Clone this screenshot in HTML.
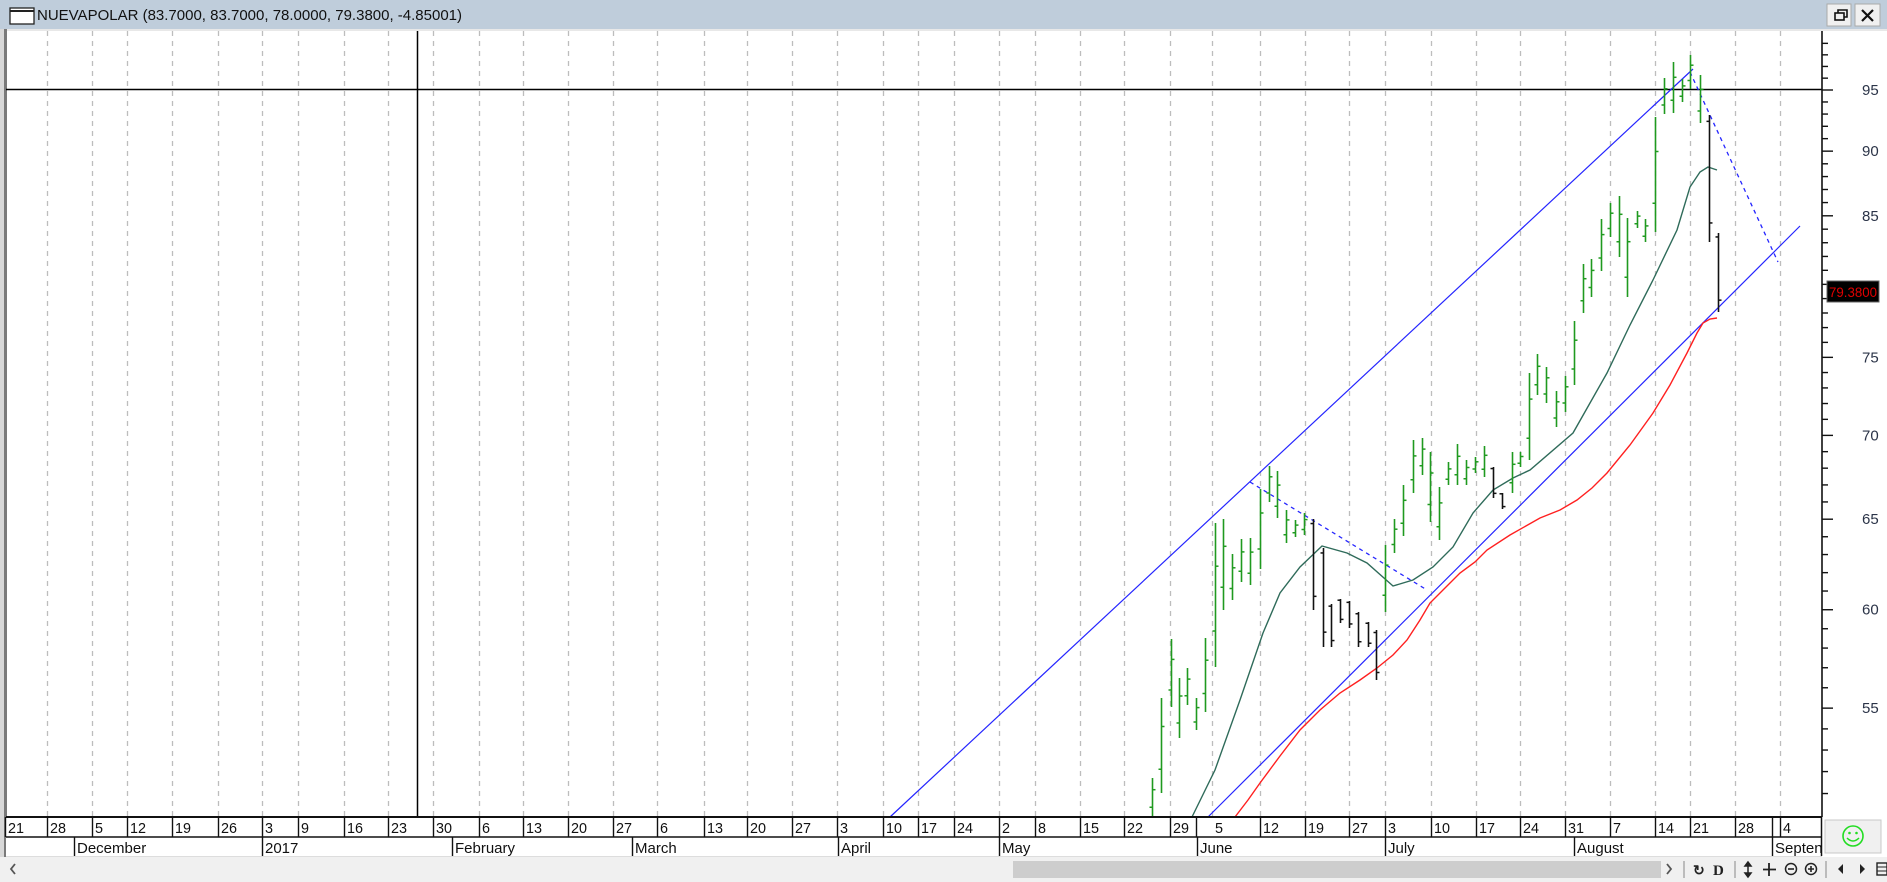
<!DOCTYPE html>
<html><head><meta charset="utf-8">
<style>
html,body{margin:0;padding:0;background:#fff;width:1887px;height:882px;overflow:hidden;font-family:"Liberation Sans",sans-serif}
svg{display:block}
</style></head>
<body>
<svg id="s" width="1887" height="882" viewBox="0 0 1887 882" xmlns="http://www.w3.org/2000/svg" font-family="Liberation Sans, sans-serif">
<rect x="0" y="0" width="1887" height="882" fill="#fff"/>
<rect x="0" y="0" width="1887" height="29" fill="#bfcddb"/>
<rect x="0" y="29" width="1887" height="2" fill="#e8e8e8"/>
<rect x="10" y="8" width="24" height="16" fill="#fff" stroke="#222" stroke-width="1.3"/>
<line x1="10" y1="11" x2="34" y2="11" stroke="#222" stroke-width="2"/>
<text x="37" y="20" font-size="15" fill="#111">NUEVAPOLAR (83.7000, 83.7000, 78.0000, 79.3800, -4.85001)</text>
<rect x="1827" y="4" width="24" height="22" fill="#f0f0f0" stroke="#aaa"/>
<rect x="1835" y="13" width="9" height="7" fill="none" stroke="#111" stroke-width="1.6"/>
<path d="M1838 13V10h9v7h-3" fill="none" stroke="#111" stroke-width="1.6"/>
<rect x="1855" y="4" width="25" height="22" fill="#f0f0f0" stroke="#aaa"/>
<path d="M1862 10l11 11M1873 10l-11 11" stroke="#111" stroke-width="2.2"/>
<rect x="0" y="29" width="4" height="828" fill="#d8d8d8"/>
<rect x="4" y="29" width="3" height="828" fill="#7a7a7a"/>
<g id="grid"></g>
<g id="chart"></g>
<g id="axis"></g>
<g id="bottom"></g>
</svg>
<script>
var NS="http://www.w3.org/2000/svg";
function el(par,tag,attrs,txt){var e=document.createElementNS(NS,tag);for(var k in attrs)e.setAttribute(k,attrs[k]);if(txt!==undefined)e.textContent=txt;document.getElementById(par).appendChild(e);return e;}
var seps=[[5,"21"],[47,"28"],[92,"5"],[127,"12"],[172,"19"],[218,"26"],[262,"3"],[298,"9"],[344,"16"],[388,"23"],[433,"30"],[479,"6"],[523,"13"],[568,"20"],[613,"27"],[657,"6"],[704,"13"],[747,"20"],[792,"27"],[837,"3"],[883,"10"],[918,"17"],[954,"24"],[999,"2"],[1035,"8"],[1080,"15"],[1124,"22"],[1170,"29"],[1212,"5"],[1260,"12"],[1305,"19"],[1349,"27"],[1385,"3"],[1431,"10"],[1476,"17"],[1520,"24"],[1565,"31"],[1610,"7"],[1655,"14"],[1690,"21"],[1735,"28"],[1780,"4"]];
seps.forEach(function(s){if(s[0]>10)el("grid","line",{x1:s[0]+.5,y1:31,x2:s[0]+.5,y2:816,stroke:"#bdbdbd","stroke-width":1.3,"stroke-dasharray":"5,5"});});
el("grid","line",{x1:6,y1:89.5,x2:1822,y2:89.5,stroke:"#000","stroke-width":1.5});
el("grid","line",{x1:417.5,y1:31,x2:417.5,y2:817,stroke:"#000","stroke-width":1.5});
el("chart","line",{x1:890,y1:817,x2:1693,y2:69,stroke:"#2525ff","stroke-width":1.2});
el("chart","line",{x1:1208,y1:817,x2:1800,y2:226,stroke:"#2525ff","stroke-width":1.2});
el("chart","line",{x1:1250,y1:482,x2:1427,y2:590,stroke:"#2525ff","stroke-width":1.3,"stroke-dasharray":"4,4"});
el("chart","line",{x1:1690,y1:72,x2:1778,y2:262,stroke:"#2525ff","stroke-width":1.3,"stroke-dasharray":"4,4"});
function poly(pts,c){el("chart","polyline",{points:pts.map(function(p){return p.join(",")}).join(" "),fill:"none",stroke:c,"stroke-width":1.4});}
poly([[1192,817],[1215,770],[1240,700],[1263,633],[1280,593],[1300,567],[1322,546],[1347,553],[1367,563],[1393,586],[1413,580],[1433,567],[1453,547],[1473,513],[1493,490],[1513,478],[1530,470],[1573,433],[1607,373],[1630,325],[1653,280],[1677,230],[1690,187],[1700,172],[1708,167],[1717,170]],"#2f6b5a");
poly([[1235,817],[1248,800],[1260,783],[1280,756],[1300,730],[1320,710],[1340,693],[1360,680],[1377,668],[1393,655],[1407,640],[1420,620],[1430,603],[1445,588],[1460,573],[1475,562],[1487,550],[1510,535],[1540,518],[1560,510],[1577,500],[1592,488],[1607,473],[1630,445],[1653,413],[1670,385],[1687,353],[1697,333],[1703,323],[1710,319],[1717,318]],"#ff2020");
var G="#1f9a1f",K="#111";
var bars=[[1152,778,817,G],[1161,698,793,G],[1171,639,707,G],[1179,678,738,G],[1187,668,705,G],[1196,698,730,G],[1205,638,712,G],[1215,523,667,G],[1223,519,610,G],[1232,554,600,G],[1241,539,582,G],[1250,538,585,G],[1260,489,569,G],[1269,466,502,G],[1277,471,518,G],[1286,510,543,G],[1295,520,537,G],[1304,513,535,G],
[1313,519,610,K],[1323,548,647,K],[1331,604,647,K],[1340,599,623,K],[1349,601,628,K],[1358,612,647,K],[1368,622,647,K],[1376,630,680,K],
[1385,545,612,G],[1394,519,553,G],[1403,485,536,G],[1413,440,493,G],[1422,438,475,G],[1430,452,522,G],[1439,487,540,G],[1448,462,485,G],[1457,444,485,G],[1466,460,485,G],[1475,457,473,G],[1484,446,477,G],
[1493,467,498,K],[1502,493,509,K],
[1512,452,493,G],[1520,452,467,G],[1529,373,460,G],[1537,354,395,G],[1546,367,403,G],[1556,391,427,G],[1565,376,412,G],[1574,321,385,G],[1583,264,313,G],[1591,259,297,G],[1601,219,271,G],[1610,203,237,G],[1619,196,257,G],[1627,218,297,G],[1637,211,228,G],[1645,219,242,G],[1655,117,232,G],[1664,78,114,G],[1673,62,113,G],[1682,79,102,G],[1690,55,89,G],[1700,75,123,G],
[1709,115,242,K],[1718,233,312,K]];
bars.forEach(function(b){var x=b[0]+.5,h=b[2]-b[1];var o,c;
 if(b[3]==G){o=b[2]-h*0.25;c=b[1]+h*0.3;}else{o=b[1]+h*0.05;c=b[2]-h*0.15;}
 el("chart","line",{x1:x,y1:b[1],x2:x,y2:b[2],stroke:b[3],"stroke-width":1.6});
 el("chart","line",{x1:x-3,y1:o,x2:x,y2:o,stroke:b[3],"stroke-width":1.5});
 el("chart","line",{x1:x,y1:c,x2:x+3,y2:c,stroke:b[3],"stroke-width":1.5});});
el("axis","rect",{x:1822,y:31,width:65,height:786,fill:"#fff"});
el("axis","line",{x1:1822,y1:31,x2:1822,y2:817,stroke:"#111","stroke-width":1.6});
function py(p){return 90+1131*Math.log(95/p);}
for(var p=50;p<=99;p++){var y=py(p);if(y<33||y>815)continue;var maj=p%5==0;
 el("axis","line",{x1:1822,y1:y,x2:maj?1833:1828,y2:y,stroke:"#111","stroke-width":1.4});
 if(maj&&p!=80)el("axis","text",{x:1862,y:y+5,"font-size":15,fill:"#2b3448"},String(p));}
el("axis","rect",{x:1827,y:281,width:52,height:21,fill:"#000",stroke:"#666"});
el("axis","text",{x:1829,y:297,"font-size":14,fill:"#e00000",textLength:48,lengthAdjust:"spacingAndGlyphs"},"79.3800");
el("bottom","rect",{x:6,y:816,width:1816,height:41,fill:"#fff"});
el("bottom","line",{x1:6,y1:817,x2:1822,y2:817,stroke:"#111","stroke-width":2});
el("bottom","line",{x1:6,y1:837,x2:1822,y2:837,stroke:"#111","stroke-width":1.5});
el("bottom","line",{x1:6,y1:856.5,x2:1822,y2:856.5,stroke:"#ddd","stroke-width":1});
el("bottom","line",{x1:1821.5,y1:817,x2:1821.5,y2:856,stroke:"#111","stroke-width":1.5});
seps.forEach(function(s){var x=s[0];var sx=x;if(s[1]=="5"&&x==1212){sx=1196;}
 el("bottom","line",{x1:sx+.5,y1:817,x2:sx+.5,y2:837,stroke:"#111","stroke-width":1.4});
 if(s[1]=="4")el("bottom","line",{x1:1772.5,y1:817,x2:1772.5,y2:837,stroke:"#111","stroke-width":1.4});
 el("bottom","text",{x:x+3,y:833,"font-size":15,fill:"#111",textLength:s[1].length*8,lengthAdjust:"spacingAndGlyphs"},s[1]);});
var months=[[74,"December"],[262,"2017"],[452,"February"],[632,"March"],[838,"April"],[999,"May"],[1197,"June"],[1385,"July"],[1574,"August"],[1772,"Septen"]];
months.forEach(function(m){el("bottom","line",{x1:m[0]+.5,y1:837,x2:m[0]+.5,y2:856,stroke:"#111","stroke-width":1.4});
 el("bottom","text",{x:m[0]+3,y:853,"font-size":15,fill:"#111"},m[1]);});
el("bottom","rect",{x:1825,y:820,width:56,height:33,fill:"#f0f0f0",stroke:"#c8c8c8"});
el("bottom","circle",{cx:1853,cy:836,r:10,fill:"none",stroke:"#22dd22","stroke-width":1.6});
el("bottom","circle",{cx:1849.5,cy:833,r:1.3,fill:"#22dd22"});
el("bottom","circle",{cx:1856.5,cy:833,r:1.3,fill:"#22dd22"});
el("bottom","path",{d:"M1847 838q6 6 12 0",fill:"none",stroke:"#22dd22","stroke-width":1.5});
el("bottom","rect",{x:0,y:857,width:1887,height:25,fill:"#f0f0f0"});
el("bottom","rect",{x:1013,y:861,width:648,height:17,fill:"#cdcdcd"});
el("bottom","path",{d:"M15 864l-4 5 4 5",fill:"none",stroke:"#555","stroke-width":1.8});
el("bottom","path",{d:"M1667 864l4 5-4 5",fill:"none",stroke:"#555","stroke-width":1.8});
el("bottom","line",{x1:1684,y1:861,x2:1684,y2:878,stroke:"#888"});
el("bottom","line",{x1:1735,y1:861,x2:1735,y2:878,stroke:"#888"});
el("bottom","line",{x1:1826,y1:861,x2:1826,y2:878,stroke:"#888"});
el("bottom","text",{x:1693,y:875,"font-size":14,"font-weight":"bold",fill:"#222"},"\u21BB");
el("bottom","text",{x:1713,y:875,"font-size":15,"font-weight":"bold","font-family":"Liberation Serif, serif",fill:"#222"},"D");
el("bottom","path",{d:"M1748 862l-3 4h6zM1748 877l-3-4h6zM1748 865v9",fill:"#222",stroke:"#222","stroke-width":1.5});
el("bottom","path",{d:"M1769 863v13M1763 869.5h13",stroke:"#222","stroke-width":1.8});
el("bottom","circle",{cx:1791,cy:869,r:5.5,fill:"none",stroke:"#222","stroke-width":1.5});
el("bottom","line",{x1:1788,y1:869,x2:1794,y2:869,stroke:"#222","stroke-width":1.6});
el("bottom","circle",{cx:1811,cy:869,r:5.5,fill:"none",stroke:"#222","stroke-width":1.5});
el("bottom","path",{d:"M1808 869h6M1811 866v6",stroke:"#222","stroke-width":1.6});
el("bottom","path",{d:"M1843 864l-5 5 5 5z",fill:"#222"});
el("bottom","path",{d:"M1860 864l5 5-5 5z",fill:"#222"});
el("bottom","rect",{x:1877,y:863,width:10,height:12,fill:"none",stroke:"#222","stroke-width":1.4});
el("bottom","path",{d:"M1877 867h10M1877 871h10",stroke:"#222"});
</script>
</body></html>
